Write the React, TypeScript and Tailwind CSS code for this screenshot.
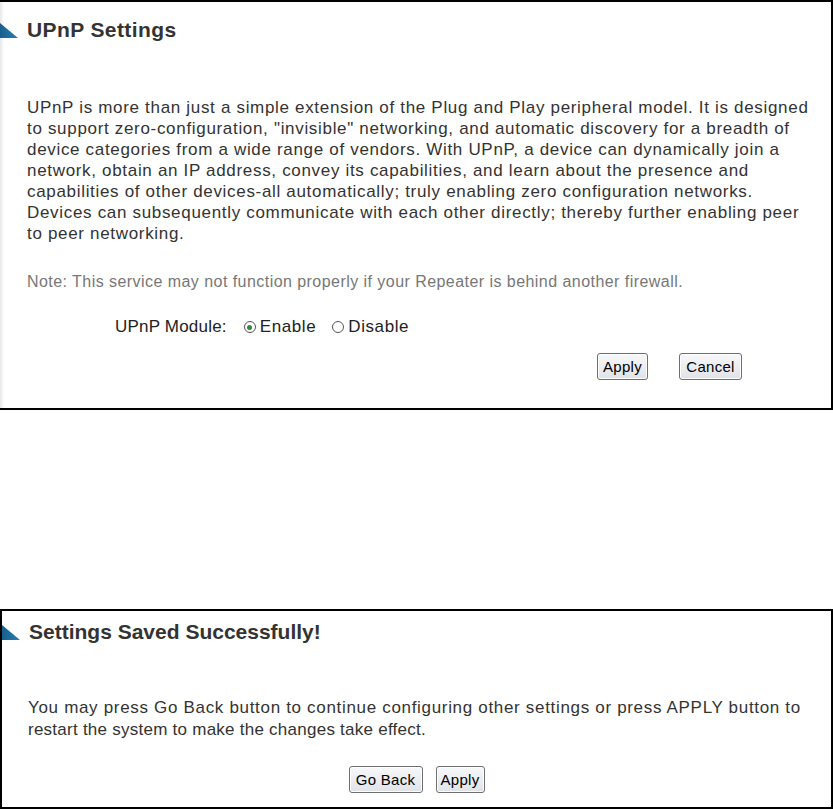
import React from "react";

const Triangle = () => (
  <svg width="18" height="15" viewBox="0 0 18 15" className="shrink-0">
    <defs>
      <linearGradient id="tg" x1="0" y1="0" x2="1" y2="0">
        <stop offset="0" stopColor="#17608c" />
        <stop offset="1" stopColor="#2a7fb0" />
      </linearGradient>
    </defs>
    <polygon points="0,0 18,15 0,15" fill="url(#tg)" />
  </svg>
);

const Btn = ({ children, w }: { children: React.ReactNode; w: string }) => (
  <button
    className={`${w} h-[27px] rounded-[3px] border border-[#6f6f6f] bg-gradient-to-b from-[#f7f8fa] to-[#dfe3e8] text-[15px] leading-none text-black shadow-[inset_0_0_0_1px_#ffffff] tracking-[0.3px] font-['Liberation_Sans',Arial,sans-serif]`}
  >
    {children}
  </button>
);

const Radio = ({ checked }: { checked?: boolean }) => (
  <span className="inline-flex h-[12px] w-[12px] items-center justify-center rounded-full border border-[#555] bg-white">
    {checked && <span className="h-[5px] w-[5px] rounded-full bg-[#2e8b3a]" />}
  </span>
);

export default function App() {
  const para1 = [
    "UPnP is more than just a simple extension of the Plug and Play peripheral model. It is designed",
    "to support zero-configuration, \"invisible\" networking, and automatic discovery for a breadth of",
    "device categories from a wide range of vendors. With UPnP, a device can dynamically join a",
    "network, obtain an IP address, convey its capabilities, and learn about the presence and",
    "capabilities of other devices-all automatically; truly enabling zero configuration networks.",
    "Devices can subsequently communicate with each other directly; thereby further enabling peer",
    "to peer networking.",
  ];
  return (
    <div className="w-[833px] h-[809px] bg-white font-['Liberation_Sans',Arial,sans-serif] text-[#333]">
      {/* Top panel */}
      <div className="relative h-[410px] border-t-2 border-r-2 border-b-2 border-black flex flex-col">
        <div className="absolute left-0 top-0 bottom-0 w-[4px] bg-gradient-to-r from-[#e6e6e6] to-white" />
        <div className="relative mt-[16px] flex items-center h-[24px]">
          <Triangle />
          <span className="ml-[9px] text-[21px] font-bold leading-[24px] text-[#333] tracking-[0.4px]">
            UPnP Settings
          </span>
        </div>
        <div className="relative mt-[55px] pl-[27px] text-[17px] leading-[21px] text-[#333] tracking-[0.68px]">
          {para1.map((l, i) => (
            <div key={i} className="whitespace-nowrap">
              {l}
            </div>
          ))}
        </div>
        <div className="relative mt-[28px] pl-[27px] text-[16px] leading-[20px] text-[#777] whitespace-nowrap tracking-[0.45px]">
          Note: This service may not function properly if your Repeater is behind another firewall.
        </div>
        <div className="relative mt-[25px] pl-[115px] flex items-center h-[20px] text-[17px] text-[#222] tracking-[0.2px]">
          <span>UPnP Module:</span>
          <span className="ml-[17px] flex items-center">
            <Radio checked />
            <span className="ml-[4px] tracking-[0.6px]">Enable</span>
          </span>
          <span className="ml-[16px] flex items-center">
            <Radio />
            <span className="ml-[4px] tracking-[0.6px]">Disable</span>
          </span>
        </div>
        <div className="relative mt-[16px] flex justify-end pr-[89px] gap-[31px]">
          <Btn w="w-[51px]">Apply</Btn>
          <Btn w="w-[63px]">Cancel</Btn>
        </div>
      </div>

      {/* Bottom panel */}
      <div className="mt-[199px] h-[200px] border-2 border-black flex flex-col">
        <div className="mt-[9px] flex items-center h-[24px]">
          <Triangle />
          <span className="ml-[9px] text-[21px] font-bold leading-[24px] text-[#333]">
            Settings Saved Successfully!
          </span>
        </div>
        <div className="mt-[53px] pl-[26px] text-[17px] leading-[22px] text-[#333]">
          <div className="whitespace-nowrap tracking-[0.68px]">
            You may press Go Back button to continue configuring other settings or press APPLY button to
          </div>
          <div className="whitespace-nowrap tracking-[0.25px]">
            restart the system to make the changes take effect.
          </div>
        </div>
        <div className="mt-[25px] flex justify-center gap-[13px]">
          <Btn w="w-[74px]">Go Back</Btn>
          <Btn w="w-[49px]">Apply</Btn>
        </div>
      </div>
    </div>
  );
}
